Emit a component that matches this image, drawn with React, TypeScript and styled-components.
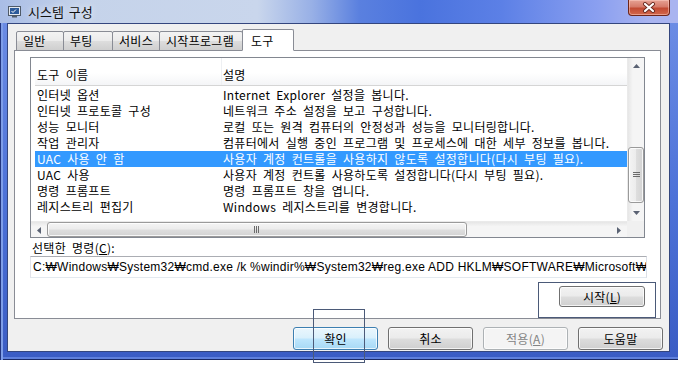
import styled, { createGlobalStyle } from 'styled-components';

const GlobalStyle = createGlobalStyle`
  html, body { margin: 0; padding: 0; background: #ffffff; }
  body {
    font-family: "Noto Sans CJK KR", "Liberation Sans", sans-serif;
    font-size: 12px;
    color: #000;
  }
  * { box-sizing: border-box; }
`;

const Page = styled.div`
  position: relative;
  width: 678px;
  height: 375px;
  overflow: hidden;
`;

const Window = styled.div`
  width: 678px;
  height: 360px;
  display: flex;
  flex-direction: column;
  background: linear-gradient(180deg, #6f8fe6 0%, #4d72d8 55%, #3a5cc4 100%);
  box-shadow: inset 1px 0 0 #22357e, inset 3px 0 0 #7f9ee8, inset 0 -1px 0 #1a2a66, inset 0 -3px 0 #5f80dc;
`;

const TitleBar = styled.div`
  height: 23px;
  flex-shrink: 0;
  display: flex;
  align-items: center;
  padding-left: 8px;
  gap: 7px;
  background: linear-gradient(90deg, #a9bde6 0%, #c5d3ea 12%, #c9d6ec 38%, #98b0e6 46%, #5a80df 53%, #4a73de 62%, #5c80e6 74%, #8a9ff0 88%, #a9b4f0 96%);
`;

const TitleText = styled.span`
  font-size: 13px;
  word-spacing: 2px;
  color: #111;
  text-shadow: 0 0 6px rgba(255, 255, 255, 0.95);
`;

const CloseButton = styled.div`
  margin-left: auto;
  margin-right: 8px;
  align-self: flex-start;
  width: 42px;
  height: 16px;
  border: 1px solid #6e2519;
  border-top: none;
  border-radius: 0 0 4px 4px;
  background: linear-gradient(180deg, #e6a294 0%, #d67b6a 45%, #c24a33 55%, #d2684c 100%);
  box-shadow: inset 0 0 0 1px rgba(255, 210, 200, 0.5);
  display: flex;
  align-items: center;
  justify-content: center;
`;

const Client = styled.div`
  flex: 1;
  margin: 0 8px 8px 7px;
  background: #f0f0f0;
  border: 1px solid #34467e;
  display: flex;
  flex-direction: column;
  padding: 5px 8px 0 6px;
`;

const TabStrip = styled.div`
  display: flex;
  align-items: flex-end;
  height: 22px;
  padding-left: 3px;
  margin-bottom: -1px;
  position: relative;
  z-index: 1;
`;

const Tab = styled.div<{ $w: number; $active?: boolean }>`
  width: ${p => p.$w}px;
  height: ${p => (p.$active ? 22 : 20)}px;
  margin-left: -1px;
  padding-left: ${p => (p.$active ? 8 : 6)}px;
  border: 1px solid #898c95;
  border-bottom: ${p => (p.$active ? '1px solid #ffffff' : '1px solid #898c95')};
  border-radius: 2px 2px 0 0;
  background: ${p =>
    p.$active
      ? '#ffffff'
      : 'linear-gradient(180deg, #f3f3f3 0%, #ebebeb 48%, #dddddd 52%, #cfcfcf 100%)'};
  line-height: ${p => (p.$active ? 22 : 18)}px;
  font-size: 12px;
  letter-spacing: 0.3px;
  white-space: nowrap;
`;

const Panel = styled.div`
  height: 269px;
  background: #ffffff;
  border: 1px solid #898c95;
  padding: 6px 15px 0 15px;
  display: flex;
  flex-direction: column;
`;

const ListView = styled.div`
  height: 181px;
  border: 1px solid #828790;
  display: grid;
  grid-template-columns: 1fr 17px;
  grid-template-rows: 1fr 16px;
  background: #ffffff;
`;

const ListBody = styled.div`
  overflow: hidden;
`;

const HeaderRow = styled.div`
  height: 28px;
  display: grid;
  grid-template-columns: 186px 1fr;
  margin-left: 4px;
  border-bottom: 1px solid #d5d5d5;
  background: linear-gradient(180deg, #ffffff 0%, #ffffff 55%, #f4f5f7 100%);
  line-height: 16px;
  word-spacing: 3px;
  letter-spacing: 0.3px;
`;

const HeaderCell = styled.div<{ $sep?: boolean }>`
  padding-left: ${p => (p.$sep ? 1 : 2)}px;
  padding-top: 9px;
  border-left: ${p => (p.$sep ? '1px solid #eef0f3' : 'none')};
`;

const Rows = styled.div`
  margin-top: 1px;
`;

const Row = styled.div<{ $selected?: boolean }>`
  height: 16px;
  line-height: 16px;
  display: grid;
  grid-template-columns: 186px 1fr;
  margin-left: 4px;
  background: ${p => (p.$selected ? '#3399ff' : 'transparent')};
  color: ${p => (p.$selected ? '#ffffff' : '#000000')};
  white-space: nowrap;
  word-spacing: 3px;
  letter-spacing: 0.3px;
`;

const Cell = styled.div`
  padding-left: 2px;
  overflow: hidden;
`;

const VScroll = styled.div`
  display: flex;
  flex-direction: column;
  background: linear-gradient(90deg, #e6e6e6 0%, #f5f5f5 30%, #f5f5f5 100%);
  border-left: 1px solid #eaeaea;
`;

const HScroll = styled.div`
  display: flex;
  background: linear-gradient(180deg, #e6e6e6 0%, #f5f5f5 30%, #f5f5f5 100%);
  border-top: 1px solid #eaeaea;
`;

const ArrowBox = styled.div`
  width: 16px;
  height: 16px;
  flex-shrink: 0;
  display: flex;
  align-items: center;
  justify-content: center;
`;

const Track = styled.div<{ $vertical?: boolean }>`
  flex: 1;
  display: flex;
  flex-direction: ${p => (p.$vertical ? 'column' : 'row')};
`;

const Thumb = styled.div<{ $vertical?: boolean }>`
  border: 1px solid #9a9a9a;
  border-radius: 3px;
  display: flex;
  align-items: center;
  justify-content: center;
  background: ${p =>
    p.$vertical
      ? 'linear-gradient(90deg, #f4f4f4 0%, #ececec 48%, #dedede 52%, #d3d3d3 100%)'
      : 'linear-gradient(180deg, #f4f4f4 0%, #ececec 48%, #dedede 52%, #d3d3d3 100%)'};
  box-shadow: inset 0 0 0 1px rgba(255, 255, 255, 0.8);
`;

const Corner = styled.div`
  background: #f0f0f0;
`;

const Label = styled.div`
  margin-top: 2px;
  line-height: 16px;
  padding-left: 2px;
  word-spacing: 3px;
  letter-spacing: 0.3px;
`;

const U = styled.span`
  text-decoration: underline;
`;

const CommandBox = styled.div`
  height: 22px;
  margin-right: -2px;
  border: 1px solid #abadb3;
  border-left-color: #e2e3ea;
  border-right-color: #dbdfe6;
  border-bottom-color: #e3e9ef;
  padding-left: 2px;
  line-height: 20px;
  white-space: nowrap;
  overflow: hidden;
  font-family: "Liberation Sans", "Noto Sans CJK KR", sans-serif;
  font-size: 12px;
  letter-spacing: 0.25px;
`;

const Button = styled.div<{ $variant?: 'default' | 'disabled' }>`
  width: 85px;
  height: 23px;
  border-radius: 3px;
  border: 1px solid ${p => (p.$variant === 'default' ? '#3c7fb1' : p.$variant === 'disabled' ? '#adb2b5' : '#707070')};
  background: ${p =>
    p.$variant === 'default'
      ? 'linear-gradient(180deg, #eaf6fd 0%, #d9f0fc 48%, #bee6fd 52%, #a7d9f5 100%)'
      : p.$variant === 'disabled'
      ? '#f4f4f4'
      : 'linear-gradient(180deg, #f2f2f2 0%, #ebebeb 48%, #dddddd 52%, #cfcfcf 100%)'};
  box-shadow: inset 0 0 0 1px rgba(255, 255, 255, 0.75);
  color: ${p => (p.$variant === 'disabled' ? '#838383' : '#000000')};
  display: flex;
  align-items: center;
  justify-content: center;
  font-size: 12px;
  letter-spacing: 0.3px;
`;

const StartButton = styled(Button)`
  align-self: flex-end;
  height: 21px;
  width: 86px;
  margin-top: 8px;
`;

const ButtonRow = styled.div`
  display: flex;
  justify-content: flex-end;
  gap: 10px;
  margin-top: 8px;
  margin-right: -2px;
`;

const Marker = styled.div`
  position: absolute;
  border: 1px solid #4b5a78;
`;

const tools = [
  ['인터넷 옵션', 'Internet Explorer 설정을 봅니다.'],
  ['인터넷 프로토콜 구성', '네트워크 주소 설정을 보고 구성합니다.'],
  ['성능 모니터', '로컬 또는 원격 컴퓨터의 안정성과 성능을 모니터링합니다.'],
  ['작업 관리자', '컴퓨터에서 실행 중인 프로그램 및 프로세스에 대한 세부 정보를 봅니다.'],
  ['UAC 사용 안 함', '사용자 계정 컨트롤을 사용하지 않도록 설정합니다(다시 부팅 필요).'],
  ['UAC 사용', '사용자 계정 컨트롤 사용하도록 설정합니다(다시 부팅 필요).'],
  ['명령 프롬프트', '명령 프롬프트 창을 엽니다.'],
  ['레지스트리 편집기', 'Windows 레지스트리를 변경합니다.'],
];

const tabs = [
  { label: '일반', w: 48 },
  { label: '부팅', w: 50 },
  { label: '서비스', w: 48 },
  { label: '시작프로그램', w: 84 },
  { label: '도구', w: 52, active: true },
];

const Arrow = ({ dir }: { dir: 'up' | 'down' | 'left' | 'right' }) => {
  const pts = {
    up: '0,4 3.5,0 7,4',
    down: '0,0 3.5,4 7,0',
    left: '4,0 0,3.5 4,7',
    right: '0,0 4,3.5 0,7',
  }[dir];
  const vert = dir === 'up' || dir === 'down';
  return (
    <svg width={vert ? 7 : 4} height={vert ? 4 : 7} viewBox={vert ? '0 0 7 4' : '0 0 4 7'}>
      <polygon points={pts} fill="#5a6273" />
    </svg>
  );
};

const Grip = ({ vertical }: { vertical?: boolean }) =>
  vertical ? (
    <svg width="7" height="6" viewBox="0 0 7 6">
      <path d="M0 0.5h7M0 2.5h7M0 4.5h7" stroke="#6b6b6b" strokeWidth="1" />
    </svg>
  ) : (
    <svg width="6" height="7" viewBox="0 0 6 7">
      <path d="M0.5 0v7M2.5 0v7M4.5 0v7" stroke="#6b6b6b" strokeWidth="1" />
    </svg>
  );

export default function App() {
  return (
    <Page>
      <GlobalStyle />
      <Window>
        <TitleBar>
          <svg width="13" height="12" viewBox="0 0 13 12">
            <rect x="0.5" y="0.5" width="12" height="9" fill="#e4e9f0" stroke="#4f5a68" />
            <rect x="2" y="2" width="9" height="6" fill="#2c5a9a" />
            <path d="M3.5 5l1.5 1.5 3-3" stroke="#ffffff" strokeWidth="1" fill="none" />
            <rect x="4" y="10" width="5" height="1.5" fill="#4f5a68" />
          </svg>
          <TitleText>시스템 구성</TitleText>
          <CloseButton>
            <svg width="14" height="11" viewBox="0 0 14 11">
              <path d="M3 2l8 7M11 2l-8 7" stroke="#6a2a20" strokeWidth="4" strokeLinecap="round" />
              <path d="M3 2l8 7M11 2l-8 7" stroke="#ffffff" strokeWidth="2.2" strokeLinecap="round" />
            </svg>
          </CloseButton>
        </TitleBar>
        <Client>
          <TabStrip>
            {tabs.map(t => (
              <Tab key={t.label} $w={t.w} $active={t.active}>
                {t.label}
              </Tab>
            ))}
          </TabStrip>
          <Panel>
            <ListView>
              <ListBody>
                <HeaderRow>
                  <HeaderCell>도구 이름</HeaderCell>
                  <HeaderCell $sep>설명</HeaderCell>
                </HeaderRow>
                <Rows>
                  {tools.map(([name, desc], i) => (
                    <Row key={name} $selected={i === 4}>
                      <Cell>{name}</Cell>
                      <Cell>{desc}</Cell>
                    </Row>
                  ))}
                </Rows>
              </ListBody>
              <VScroll>
                <ArrowBox><Arrow dir="up" /></ArrowBox>
                <Track $vertical>
                  <Thumb $vertical style={{ marginTop: 73, height: 56 }}>
                    <Grip vertical />
                  </Thumb>
                </Track>
                <ArrowBox><Arrow dir="down" /></ArrowBox>
              </VScroll>
              <HScroll>
                <ArrowBox><Arrow dir="left" /></ArrowBox>
                <Track>
                  <Thumb style={{ width: 420 }}>
                    <Grip />
                  </Thumb>
                </Track>
                <ArrowBox><Arrow dir="right" /></ArrowBox>
              </HScroll>
              <Corner />
            </ListView>
            <Label>
              선택한 명령(<U>C</U>):
            </Label>
            <CommandBox>
              C:₩Windows₩System32₩cmd.exe /k %windir%₩System32₩reg.exe ADD HKLM₩SOFTWARE₩Microsoft₩
            </CommandBox>
            <StartButton>
              시작(<U>L</U>)
            </StartButton>
          </Panel>
          <ButtonRow>
            <Button $variant="default">확인</Button>
            <Button>취소</Button>
            <Button $variant="disabled">
              적용(<U>A</U>)
            </Button>
            <Button>도움말</Button>
          </ButtonRow>
        </Client>
      </Window>
      <Marker style={{ left: 538, top: 282, width: 118, height: 36 }} />
      <Marker style={{ left: 313, top: 309, width: 52, height: 54 }} />
    </Page>
  );
}
